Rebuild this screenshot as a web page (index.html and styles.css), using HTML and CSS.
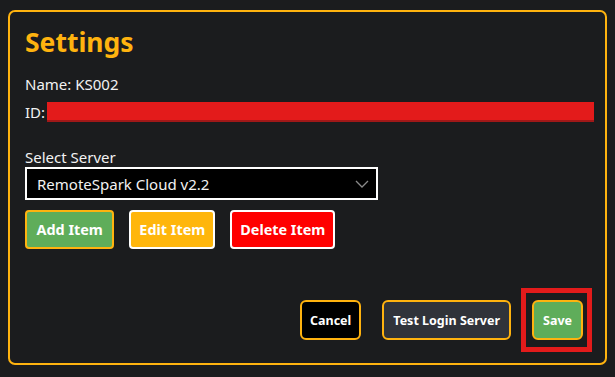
FILE: index.html
```html
<!DOCTYPE html>
<html lang="en">
<head>
    <meta charset="UTF-8">
    <meta name="viewport" content="width=device-width, initial-scale=1.0">
    <title>Settings</title>
    <link rel="stylesheet" href="styles.css">
</head>
<body>
    <div class="panel">
        <h1>Settings</h1>
        <div class="info">Name: KS002</div>
        <div class="info id-row">ID: <span class="redacted"></span></div>

        <label class="field-label" for="server">Select Server</label>
        <div class="select-box">
            <span>RemoteSpark Cloud v2.2</span>
            <svg class="chevron" width="14" height="8" viewBox="0 0 14 8"><path d="M1 1 L7 7 L13 1" fill="none" stroke="#8a8a8a" stroke-width="1.3"/></svg>
        </div>

        <div class="item-buttons">
            <button class="btn btn-add">Add Item</button>
            <button class="btn btn-edit">Edit Item</button>
            <button class="btn btn-delete">Delete Item</button>
        </div>

        <div class="footer">
            <button class="btn-small btn-cancel">Cancel</button>
            <button class="btn-small btn-test">Test Login Server</button>
            <div class="highlight">
                <button class="btn-small btn-save">Save</button>
            </div>
        </div>
    </div>
</body>
</html>
```

FILE: styles.css
```css
body {
    margin: 0;
    padding: 0;
    height: 100vh;
    background-color: #1b1c1e;
    font-family: "Noto Sans", "Open Sans", sans-serif;
    color: #f2f2f2;
    overflow: hidden;
}

.panel {
    box-sizing: border-box;
    width: 599px;
    height: 355px;
    margin: 10px 0 0 8px;
    padding: 11px 13px 11px 15px;
    border: 2px solid #ffb30f;
    border-radius: 7px;
    display: flex;
    flex-direction: column;
}

h1 {
    margin: 0 0 13px 0;
    font-size: 26.5px;
    line-height: 38px;
    font-weight: bold;
    color: #ffb30f;
}

.info {
    font-size: 15px;
    line-height: 20px;
    margin-bottom: 8px;
}

.id-row {
    display: flex;
    align-items: center;
}

.redacted {
    display: block;
    flex: 1;
    height: 18px;
    margin-left: 2px;
    margin-right: -2px;
    background: #e31b1b;
    border-bottom: 2px solid #a11818;
}

.field-label {
    margin-top: 17px;
    font-size: 15px;
    line-height: 20px;
    display: block;
}

.select-box {
    box-sizing: border-box;
    width: 353px;
    height: 33px;
    background: #000;
    border: 2px solid #fff;
    display: flex;
    align-items: center;
    justify-content: space-between;
    padding: 0 7px 0 10px;
    font-size: 15px;
}

.item-buttons {
    display: flex;
    gap: 15px;
    margin-top: 10px;
}

.btn {
    box-sizing: border-box;
    height: 39px;
    padding: 0 8px;
    border-radius: 4px;
    border: 2px solid #fff;
    font-family: inherit;
    font-size: 14.4px;
    font-weight: bold;
    color: #fff;
}

.btn-add {
    background: #5fad5a;
    border-color: #ffb30f;
    padding: 0 9.5px;
}

.btn-edit {
    background: #ffb60c;
}

.btn-delete {
    background: #ff0000;
}

.footer {
    margin-top: auto;
    display: flex;
    justify-content: flex-end;
    align-items: center;
}

.btn-small {
    box-sizing: border-box;
    height: 40px;
    padding: 0 8px;
    border: 2px solid #ffb30f;
    border-radius: 6px;
    font-family: inherit;
    font-size: 12.5px;
    font-weight: bold;
    color: #fff;
}

.btn-cancel {
    background: #000;
    margin-right: 21px;
}

.btn-test {
    background: #30333a;
    margin-right: 10px;
    padding: 0 9px;
}

.btn-save {
    background: #5fad5a;
    padding: 0 9px;
}

.highlight {
    border: 5px solid #e31b1b;
    padding: 7px 4px 7px 6px;
}
```
